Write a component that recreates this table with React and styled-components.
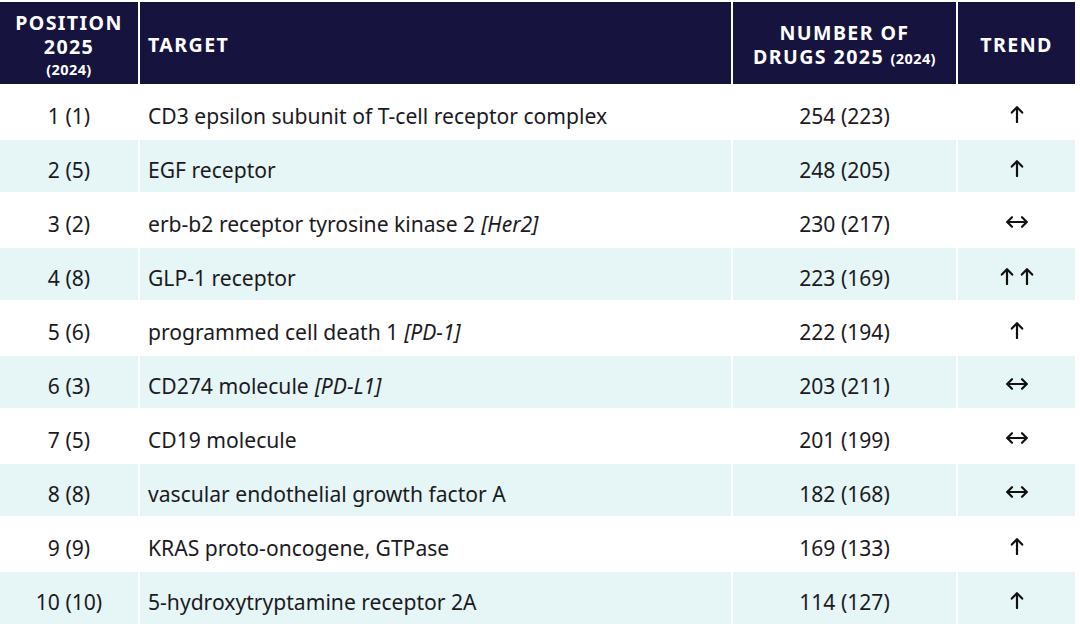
import React from 'react';
import styled, { createGlobalStyle } from 'styled-components';

const GlobalStyle = createGlobalStyle`
  html, body {
    margin: 0;
    padding: 0;
    background: #fff;
  }
  body {
    font-family: "Noto Sans", "Open Sans", "DejaVu Sans", sans-serif;
    color: #1b1b1f;
  }
`;

const Page = styled.div`
  width: 1080px;
  height: 626px;
  padding-top: 2px;
  box-sizing: border-box;
  overflow: hidden;
`;

const Table = styled.div`
  width: 1075px;
  display: grid;
  grid-template-columns: 138px 591px 223px 117px;
  column-gap: 2px;
  row-gap: 2px;
  background: #fff;
`;

const HeadCell = styled.div`
  height: 82px;
  background: #16133f;
  color: #fff;
  font-weight: 700;
  font-size: 19.6px;
  line-height: 24px;
  letter-spacing: 1.4px;
  display: flex;
  flex-direction: column;
  justify-content: center;
  align-items: ${p => (p.left ? 'flex-start' : 'center')};
  text-align: ${p => (p.left ? 'left' : 'center')};
  padding-left: ${p => (p.left ? '8px' : '0')};
  padding-top: 4px;
  box-sizing: border-box;
`;

const Line = styled.span`
  display: block;
  line-height: 24px;
`;

const Small = styled.span`
  font-size: 14.5px;
  line-height: 20px;
  letter-spacing: 0.4px;
`;

const Cell = styled.div`
  height: 52px;
  background: ${p => (p.shaded ? '#e6f5f5' : '#fff')};
  font-size: 21.1px;
  display: flex;
  align-items: center;
  justify-content: ${p => (p.left ? 'flex-start' : 'center')};
  gap: 6px;
  padding-left: ${p => (p.left ? '8px' : '0')};
  padding-top: 6px;
  box-sizing: border-box;
  white-space: nowrap;
`;

const Alias = styled.i`
  font-style: italic;
`;

const TrendBox = styled.div`
  display: flex;
  align-items: center;
  gap: 6px;
  color: #111;
  margin-top: -3px;
`;

const Up = () => (
  <svg width="14" height="18" viewBox="0 0 14 18" fill="none" stroke="currentColor"
    strokeWidth="2.2" strokeLinecap="round" strokeLinejoin="round">
    <path d="M7 17V2.5" />
    <path d="M1.8 7.6 7 2.3l5.2 5.3" />
  </svg>
);

const Both = () => (
  <svg width="24" height="14" viewBox="0 0 24 14" fill="none" stroke="currentColor"
    strokeWidth="2.2" strokeLinecap="round" strokeLinejoin="round">
    <path d="M2.5 7h19" />
    <path d="M7 2.2 2.2 7 7 11.8" />
    <path d="M17 2.2 21.8 7 17 11.8" />
  </svg>
);

const Trend = ({ kind }) => (
  <TrendBox>
    {kind === 'up' && <Up />}
    {kind === 'upup' && (<><Up /><Up /></>)}
    {kind === 'same' && <Both />}
  </TrendBox>
);

const rows = [
  ['1 (1)', 'CD3 epsilon subunit of T-cell receptor complex', null, '254 (223)', 'up'],
  ['2 (5)', 'EGF receptor', null, '248 (205)', 'up'],
  ['3 (2)', 'erb-b2 receptor tyrosine kinase 2', '[Her2]', '230 (217)', 'same'],
  ['4 (8)', 'GLP-1 receptor', null, '223 (169)', 'upup'],
  ['5 (6)', 'programmed cell death 1', '[PD-1]', '222 (194)', 'up'],
  ['6 (3)', 'CD274 molecule', '[PD-L1]', '203 (211)', 'same'],
  ['7 (5)', 'CD19 molecule', null, '201 (199)', 'same'],
  ['8 (8)', 'vascular endothelial growth factor A', null, '182 (168)', 'same'],
  ['9 (9)', 'KRAS proto-oncogene, GTPase', null, '169 (133)', 'up'],
  ['10 (10)', '5-hydroxytryptamine receptor 2A', null, '114 (127)', 'up'],
];

export default function App() {
  return (
    <Page>
      <GlobalStyle />
      <Table>
        <HeadCell>
          <Line>POSITION</Line>
          <Line>2025</Line>
          <Small>(2024)</Small>
        </HeadCell>
        <HeadCell left>TARGET</HeadCell>
        <HeadCell>
          <Line>NUMBER OF</Line>
          <Line>DRUGS 2025 <Small>(2024)</Small></Line>
        </HeadCell>
        <HeadCell>TREND</HeadCell>
        {rows.map(([pos, target, alias, count, trend], i) => {
          const shaded = i % 2 === 1;
          return (
            <React.Fragment key={pos}>
              <Cell shaded={shaded}>{pos}</Cell>
              <Cell shaded={shaded} left>
                <span>{target}</span>
                {alias && <Alias>{alias}</Alias>}
              </Cell>
              <Cell shaded={shaded}>{count}</Cell>
              <Cell shaded={shaded}><Trend kind={trend} /></Cell>
            </React.Fragment>
          );
        })}
      </Table>
    </Page>
  );
}
